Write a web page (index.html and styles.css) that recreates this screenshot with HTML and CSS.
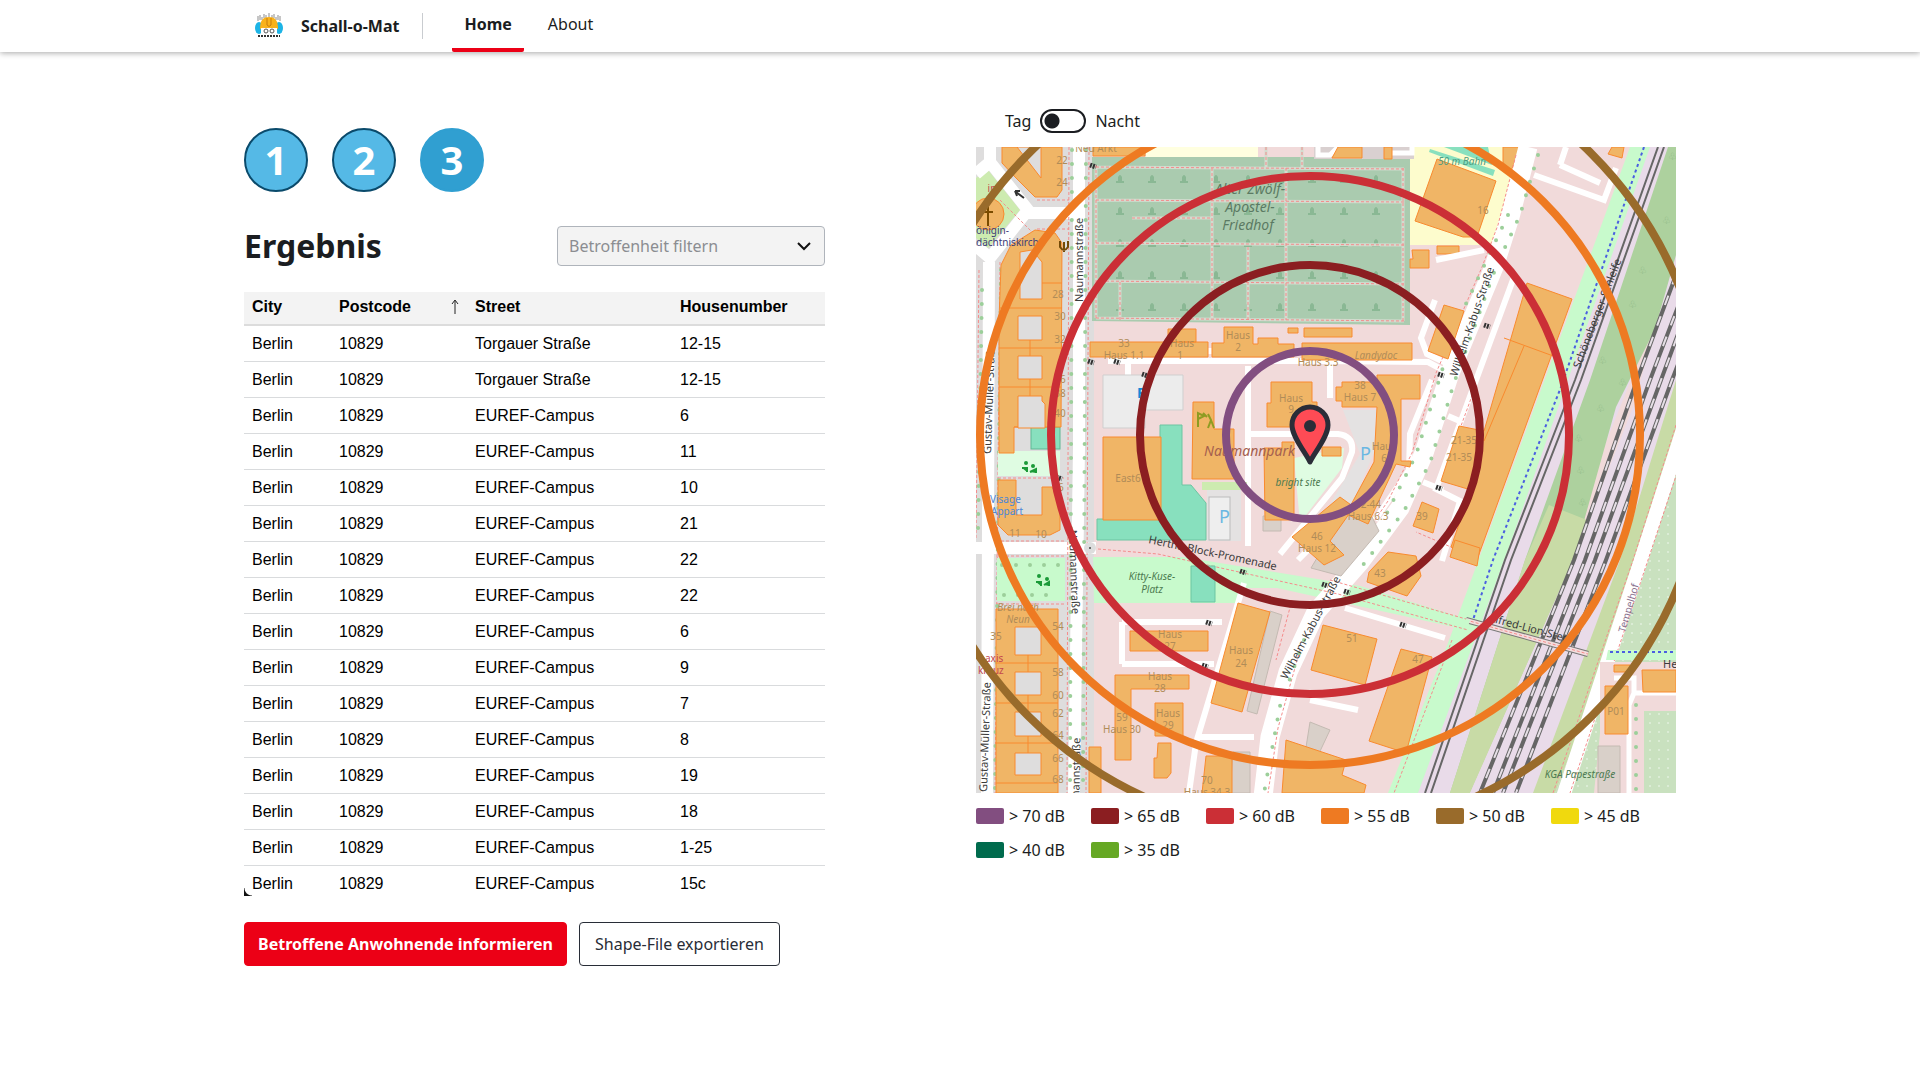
FILE: index.html
```html
<!DOCTYPE html>
<html lang="de">
<head>
<meta charset="utf-8">
<meta name="viewport" content="width=device-width, initial-scale=1">
<title>Schall-o-Mat</title>
<link rel="stylesheet" href="styles.css">
</head>
<body>
<header class="topbar">
  <div class="topbar-inner">
    <a class="brand" href="#">
      <svg class="logo" viewBox="0 0 30 26" aria-hidden="true">
        <g stroke="#8d8d8d" stroke-width="1"><path d="M4 3v5M6 2v5M8 4v3M10 1v4M12 2v3M15 0v4M18 2v3M20 1v4M22 4v3M24 2v5M26 3v5"/></g>
        <ellipse cx="5" cy="15" rx="4" ry="6" fill="#1db4e6"/><ellipse cx="25" cy="15" rx="4" ry="6" fill="#1db4e6"/>
        <path d="M6 16C6 7 9 4 15 4s9 3 9 12z" fill="#f9b21a"/>
        <path d="M13 5v7q2 3 4 0V5" fill="none" stroke="#c77d0b"/>
        <path d="M7 15h16v6q-8 2-16 0z" fill="#fff"/>
        <g fill="#fff" stroke="#555"><circle cx="12" cy="18" r="2"/><circle cx="18" cy="18" r="2"/></g>
        <path d="M4 23h22" stroke="#333" stroke-width="2" stroke-dasharray="2 1"/>
      </svg>
      <span>Schall-o-Mat</span>
    </a>
    <nav class="nav">
      <a class="nav-link active" href="#">Home</a>
      <a class="nav-link" href="#">About</a>
    </nav>
  </div>
</header>

<main class="page">
  <section class="results">
    <div class="steps">
      <button class="step">1</button>
      <button class="step">2</button>
      <button class="step current">3</button>
    </div>
    <div class="results-head">
      <h1>Ergebnis</h1>
      <div class="select-wrap">
        <select class="filter" aria-label="Betroffenheit filtern"><option>Betroffenheit filtern</option></select>
        <svg class="chevron" viewBox="0 0 16 16" aria-hidden="true"><path d="M2 5l6 6 6-6" fill="none" stroke="#111" stroke-width="2"/></svg>
      </div>
    </div>
    <div class="table-wrap">
      <table class="grid">
        <thead><tr><th class="c-city">City</th><th class="c-post"><span class="sorted">Postcode <svg viewBox="0 0 8 16" aria-hidden="true"><path d="M4 15V2M1 5l3-4 3 4" fill="none" stroke="#222"/></svg></span></th><th class="c-street">Street</th><th>Housenumber</th></tr></thead>
        <tbody>
          <tr><td>Berlin</td><td>10829</td><td>Torgauer Straße</td><td>12-15</td></tr>
          <tr><td>Berlin</td><td>10829</td><td>Torgauer Straße</td><td>12-15</td></tr>
          <tr><td>Berlin</td><td>10829</td><td>EUREF-Campus</td><td>6</td></tr>
          <tr><td>Berlin</td><td>10829</td><td>EUREF-Campus</td><td>11</td></tr>
          <tr><td>Berlin</td><td>10829</td><td>EUREF-Campus</td><td>10</td></tr>
          <tr><td>Berlin</td><td>10829</td><td>EUREF-Campus</td><td>21</td></tr>
          <tr><td>Berlin</td><td>10829</td><td>EUREF-Campus</td><td>22</td></tr>
          <tr><td>Berlin</td><td>10829</td><td>EUREF-Campus</td><td>22</td></tr>
          <tr><td>Berlin</td><td>10829</td><td>EUREF-Campus</td><td>6</td></tr>
          <tr><td>Berlin</td><td>10829</td><td>EUREF-Campus</td><td>9</td></tr>
          <tr><td>Berlin</td><td>10829</td><td>EUREF-Campus</td><td>7</td></tr>
          <tr><td>Berlin</td><td>10829</td><td>EUREF-Campus</td><td>8</td></tr>
          <tr><td>Berlin</td><td>10829</td><td>EUREF-Campus</td><td>19</td></tr>
          <tr><td>Berlin</td><td>10829</td><td>EUREF-Campus</td><td>18</td></tr>
          <tr><td>Berlin</td><td>10829</td><td>EUREF-Campus</td><td>1-25</td></tr>
          <tr><td>Berlin</td><td>10829</td><td>EUREF-Campus</td><td>15c</td></tr>
        </tbody>
      </table>
      <span class="corner"></span>
    </div>
    <div class="actions">
      <button class="btn primary">Betroffene Anwohnende informieren</button>
      <button class="btn">Shape-File exportieren</button>
    </div>
  </section>

  <section class="map-side">
    <label class="toggle"><span>Tag</span><input type="checkbox" role="switch"><span>Nacht</span></label>
    <svg class="map" viewBox="976 147 700 646" role="img" aria-label="Karte">
      <defs>
        <pattern id="stones" x="1104" y="164" width="32" height="32" patternUnits="userSpaceOnUse"><path d="M14 13q2-4 4 0v4h2v2h-8v-2h2z" fill="#8ab894"/></pattern>
        <pattern id="dots" width="9" height="9" patternUnits="userSpaceOnUse"><circle cx="3" cy="3" r="1" fill="#e2f0dc"/></pattern>
      </defs>
      <rect x="976" y="147" width="700" height="646" fill="#f1dada"/>

      <!-- residential strip west of Naumannstraße -->
      <rect x="976" y="147" width="118" height="646" fill="#dedddd"/>
      <path d="M976 178l12-8 32 40-32 38-12-10z" fill="#cdebb0"/>
      <path d="M976 174l14-12 38 48-38 48-14-12M990 162v-15M1028 213h50M989 262l-2 531M976 548h120" fill="none" stroke="#fff" stroke-width="12"/>
      <path d="M1079 147v300l-5 346" fill="none" stroke="#fff" stroke-width="12"/>
      <path d="M1069 147l-2 646M1089 147l-3 646M1000 200l60 60M1037 200h32M1037 229h32M1000 262l-5 531M979 270l-3 270M998 478h66M996 541h70M996 556h70M996 604h68" class="foot"/>
      <path d="M1072 150l-2 640M1086 150l-3 640M1001 270l-6 520M982 290l-4 240" class="trees"/>
      <rect x="997" y="558" width="68" height="43" fill="#c8facc"/>
      <path d="M1002 565h58M1004 595h56" class="trees"/>
      <rect x="998" y="451" width="62" height="25" fill="#dffce2"/>
      <rect x="1031" y="427" width="29" height="22" fill="#88e0be" stroke="#5fb794"/>
      <g class="bld">
        <path d="M1002 147h60v43l-5 7h-22l-20-20-13-14zM1035 230l20 3 7 10-1 184h-47v26h-15V320l2-55 10-20z"/>
        <path d="M998 480h18v35h26v-28h18v43l-10 5h-42l-10-10zM996 609h62v184h-62z"/>
        <path d="M999 348h62M999 387h62M1000 308h62M1030 338v18M1030 379v17M996 663h62M996 703h62M996 743h62M996 783h62M1028 655v17M1028 695v17M1028 736v17M1041 283h21M1014 427h17"/>
        <circle cx="988" cy="214" r="16"/>
      </g>
      <g class="court">
        <path d="M1017 147h24v31zM1020 252l12-2 10 12v37h-22zM1018 316h24v24h-24zM1018 356h24v23h-24zM1018 396h24v5l3 3v24h-27z"/>
        <path d="M1015 627h26v28h-26zM1015 672h26v23h-26zM1015 712h26v24h-26zM1015 753h26v22h-26z"/>
      </g>
      <path d="M988 206v20M983 212h10" stroke="#7a4b00" stroke-width="2"/>
      <path d="M1016 192l8 6M1015 191l5 0M1015 191l2 5" stroke="#333" stroke-width="2" fill="none"/>
      <g fill="#1b9a38"><circle cx="1026" cy="463" r="2"/><circle cx="1033" cy="466" r="2"/><path d="M1022 468l5 0 0 4M1030 472l6-3v4" stroke="#1b9a38" stroke-width="2"/><circle cx="1039" cy="576" r="2"/><circle cx="1047" cy="579" r="2"/><path d="M1036 582l5 0 0 4M1044 585l5-3v4" stroke="#1b9a38" stroke-width="2"/></g>

      <!-- cemetery and sports ground -->
      <path d="M1092 157h318v168l-318-4z" fill="#aacbaf"/>
      <path d="M1094 170h310v150h-310z" fill="url(#stones)"/>
      <path d="M1096 167l308 2M1096 200l308 2M1096 243l308 2M1096 281l308 3M1096 318l308 3M1096 165v153M1212 168v150M1286 168v152M1248 247v72M1403 168v153M1132 218h80M1266 147v20M1302 147v20M1120 282v38" class="foot halo"/>
      <path d="M1096 167l308 2M1096 200l308 2M1096 243l308 2M1096 281l308 3M1096 318l308 3M1096 165v153M1212 168v150M1286 168v152M1248 247v72M1403 168v153M1132 218h80M1266 147v20M1302 147v20M1120 282v38" class="foot"/>
      <path d="M1146 147h112v10h-112z" fill="#ffffe0"/>
      <path d="M1410 147h110l-24 98h-86z" fill="#fdfccd"/>
      <path d="M1430 149l65 21-2 6-64-24zM1444 147h44l4 18z" fill="#88e0be"/>
      <path d="M1314 147h100v12h-100z" fill="#d9d0d0"/>
      <path d="M1318 147v8h12l8-8M1392 153h20v-6" fill="none" stroke="#fff" stroke-width="5"/>
      <g class="bld"><path d="M1093 147h52v9h-52zM1338 147h24v11h-30zM1384 147h8v12h-8z"/><path d="M1437 159l59 22-19 56-14 0-48-16zM1503 147h18l-10 24-8-4zM1412 250h17v18h-19v-9h3zM1437 246h22v8h-22z"/></g>

      <!-- railway corridor -->
      <path d="M1630 147h22l-78 233-70 180-80 233h-36l60-150z" fill="#c8facc"/>
      <path d="M1650 147h26v120l-210 526h-48l90-243z" fill="#e9dbe9"/>
      <path d="M1668 147h8v140l-60 120-43 153-103 233h-20l75-233 65-180z" fill="#add19e"/>
      <path d="M1549 505l38 15-14 40-103 233h-20l75-233z" fill="#c8dba6"/>
      <path d="M1676 255v195l-42 110-90 233h-74l103-233 60-153z" fill="#e9dbe9"/>
      <path d="M1676 380v70l-31 110-90 233h-22l87-233z" fill="#c8dba6"/>
      <path d="M1676 430v363h-121l90-233z" fill="#c9e1bf"/><path d="M1676 430v363h-121l90-233z" fill="url(#dots)"/>
      <path d="M1658 147l-83 233-70 180-80 233M1664 147l-83 233-70 180-80 233" fill="none" stroke="#666" stroke-width="2"/>
      <path d="M1644 147l-83 240-68 173-20 60" fill="none" stroke="#4a5fe0" stroke-width="2" stroke-dasharray="3 3"/>
      <path d="M1676 275l-39 105-63 180-94 233M1690 275l-40 105-65 180-92 233M1700 275l-39 105-66 180-92 233M1712 275l-40 105-66 180-90 233" class="rail-a"/>
      <path d="M1676 275l-39 105-63 180-94 233M1690 275l-40 105-65 180-92 233M1700 275l-39 105-66 180-92 233M1712 275l-40 105-66 180-90 233" class="rail-b"/>
      <path d="M1686 420l-45 140-79 240" fill="none" stroke="#fff" stroke-width="14"/>
      <path d="M1676 425l-43 135-80 233M1688 440l-40 120-78 233" class="foot"/>
      <path d="M1466 620l122 34" stroke="#777" stroke-width="6"/><path d="M1466 620l122 34" stroke="#f3dddd" stroke-width="4"/><path d="M1466 620l122 34" class="foot"/>
      <path d="M1608 650h68v10h-70z" fill="#c8facc"/><path d="M1610 652h66" stroke="#4a5fe0" stroke-width="2" stroke-dasharray="3 3"/>
      <path d="M1600 662h76v131h-82l6-60z" fill="#f1dada"/><path d="M1644 711h32v82h-32z" fill="#c9e1bf"/><path d="M1644 711h32v82h-32z" fill="url(#dots)"/>
      <path d="M1614 678h20v15h42M1634 693l-5 12v88" fill="none" stroke="#fff" stroke-width="5"/>
      <path d="M1636 705v85" class="trees"/>
      <g class="bld"><path d="M1614 665h16v7h-16zM1642 670h34v22h-33zM1605 686h23v48h-23z"/></g>
      <path d="M1598 746h22v47h-22z" class="shade"/>

      <!-- streets of the campus -->
      <path d="M1093 557h90l177 29 110 34-3 10-190-42h-32l-7 15h-144z" fill="#c8facc"/>
      <g fill="none" stroke="#fff" stroke-width="6">
        <path d="M1108 361h210l110 1 26 14M1248 366v180M1248 434h90q16 2 14 18l-10 26-62 76M1128 355v22M1318 540l-20 20M1330 364v34"/>
        <path d="M1435 300l-14 38 6 16 30 14M1436 260l48-10M1514 277l-56 152-22 60 24 12-18 60M1432 380l-22 54-1 36-34 50M1448 416l14 6M1423 482l20 8M1244 583l-48 160-7 50M1200 737h54M1122 622h100M1122 664h92M1122 622v42M1345 608l100 30M1310 700l48 10M1258 352h35M1094 351h140M1534 175l70 25 12-32M1560 165l40 18M1560 165l6-18"/>
      </g>
      <path d="M1528 147l-18 70-16 50-44 106-26 80-24 55-40 54-44 50-28 60-18 65-7 60" fill="none" stroke="#fff" stroke-width="19"/>
      <path d="M1516 155l-18 70-16 42-46 106-24 80-24 48-40 58M1476 385l-22 60M1300 650l-22 78-10 65M1292 600l-16 60M1458 550l-42-18M1098 549l60 5 180 40 130 36M1330 580l136 39M1452 640l-58 153" class="foot"/>
      <path d="M1538 155l-18 60-24 52-42 116-24 80-26 48-44 58M1508 215l-52 110-40 130-30 60M1304 640l-24 66-16 87" class="trees"/>
      <path d="M1103 375h80v35h-38v18h-42z" fill="#ececec" stroke="#cfcfcf"/>
      <path d="M1207 487h34v54h-34zM1343 410h33l-1 40-25 60-20-6 30-50z" fill="#e4e2e2"/>
      <rect x="1209" y="497" width="21" height="43" fill="#eee" stroke="#bbb"/>
      <path d="M1160 425h22v60h9l15 18v37h-109v-21h63z" class="teal"/><path d="M1191 566h24v36h-24z" class="teal"/>
      <path d="M1294 458l50-10-2 20-42 55z" fill="#dffce2"/><path d="M1202 482h45l-2 8h-43z" fill="#cdebb0"/>
      <path d="M1263 516h18v15h-18zM1270 611l12 4-25 99-10-3zM1344 513l25-2 10 20-38 45-30-8zM1233 752h17v41h-20zM1310 722l20 8-16 34-10-4z" class="shade"/>

      <g class="bld">
        <path d="M1090 342h118v15h-118zM1168 329h28v13h-28zM1212 343h12v-16h29v17h5v-6h20v6h16v13h-82zM1302 343h110v17h-110zM1288 328h10v5h-10zM1304 328h48v9h-48z"/>
        <path d="M1103 437h58v83h-58zM1193 402h21v27h20v50h-42zM1271 382h41v20h5v25h-50v-24h4zM1264 448h18v-6h12v78h-29z"/>
        <path d="M1342 382h35v-7h43v24h-19v62h10l-1 6-14-3-28 60-22-10 28-52 3-55h-35v-6h-6v-14h6zM1322 447h19v9h-19zM1340 497l14 10-24 34 14 14-20 10-32-28z"/>
        <path d="M1444 305l20 6-16 48-20-8zM1527 283l45 16-94 258-27-10 20-57-30-9 18-55 25 5zM1504 338l52 19M1524 346l-40 95M1422 502l17 7-6 24-20-7zM1388 552l28 4 5 20-14 20-40-14 2-10z"/>
        <path d="M1238 603l32 9-28 100-31-9zM1130 631h78v20h-78zM1115 675h74v14h-58v71h-16zM1155 703h28v33h-28zM1158 743h13v30l-4 5h-13v-20h3zM1089 747h12v46h-12zM1206 756h26v37h-30z"/>
        <path d="M1323 625l54 14-12 46-54-15zM1401 649l31 8-26 96-37-12zM1286 740l60 20-4 15 24 10-2 8h-82zM1455 540l25 8-3 18-27-9zM1612 147h12l-2 11-14-4z"/>
      </g>
      <path d="M1088 361l6 2M1114 361l6 2M1142 374l6 2M1206 622l6 2M1240 571l6 2M1202 665l6 2M1056 477l6 2M1438 374l6 2M1436 487l6 2M1400 624l6 2M1484 325l6 2M1090 165l6 2M1322 584l6 2M1344 591l6 2" stroke="#333" stroke-width="5" stroke-dasharray="2 1"/>
      <circle cx="1090" cy="548" r="6" fill="#ddd"/><circle cx="1090" cy="548" r="1" fill="#444"/>
      <g fill="#8bb583" font-size="10" opacity=".8"><text x="1668" y="160">♧</text><text x="1662" y="224">♧</text><text x="1638" y="274">♧</text><text x="1628" y="308">♧</text><text x="1598" y="364">♧</text><text x="1618" y="386">♧</text><text x="1596" y="412">♧</text><text x="1574" y="442">♧</text><text x="1576" y="474">♧</text><text x="1578" y="506">♧</text></g>

      <g class="lbl">
        <g class="area"><text x="1250" y="194">Alter Zwölf-</text><text x="1250" y="212">Apostel-</text><text x="1248" y="230">Friedhof</text></g>
        <g class="road">
          <text transform="translate(1083 302) rotate(-90)">Naumannstraße</text>
          <text transform="translate(1069 530) rotate(88)">Naumannstraße</text>
          <text transform="translate(1079 822) rotate(-89)">Naumannstraße</text>
          <text transform="translate(991 454) rotate(-88)">Gustav-Müller-Straße</text>
          <text transform="translate(987 792) rotate(-88)">Gustav-Müller-Straße</text>
          <text transform="translate(1457 377) rotate(-71)">Wilhelm-Kabus-Straße</text>
          <text transform="translate(1287 680) rotate(-62)">Wilhelm-Kabus-Straße</text>
          <text transform="translate(1580 369) rotate(-69)">Schöneberger-Schleife</text>
          <text transform="translate(1148 543) rotate(12)">Hertha-Block-Promenade</text>
          <text transform="translate(1488 621) rotate(15)">Alfred-Lion-Steg</text>
          <text x="1663" y="668">Hedwig</text>
        </g>
        <text transform="translate(1625 633) rotate(-74)" fill="#8a7390">Tempelhof</text>
        <g class="green"><text x="1152" y="580">Kitty-Kuse-</text><text x="1152" y="593">Platz</text><text x="1298" y="486">bright site</text><text x="1580" y="778">KGA Papestraße</text><text x="1462" y="165" fill="#4e9b80">50 m Bahn</text></g>
        <text x="1204" y="456" font-size="14" font-style="italic" fill="#a5604f">Naumannpark</text>
        <g class="blue"><text x="976" y="234">önigin-</text><text x="976" y="246">dächtniskirche</text></g>
        <g fill="#4a86d8"><text x="990" y="503">Visage</text><text x="991" y="515">Appart</text></g>
        <g fill="#c4484e"><text x="992" y="192" text-anchor="middle">in</text><text x="985" y="662">axis</text><text x="978" y="674">kreuz</text></g>
        <g font-size="18" fill="#6ab7e2"><text x="1219" y="523">P</text><text x="1360" y="460">P</text></g>
        <text x="1137" y="398" font-size="15" font-weight="700" fill="#1389d6">P</text>
        <g class="house">
          <text x="1128" y="482">East6</text><text x="1124" y="347">33</text><text x="1124" y="359">Haus 1.1</text><text x="1182" y="347">Haus</text><text x="1180" y="359">1</text><text x="1238" y="339">Haus</text><text x="1238" y="351">2</text><text x="1318" y="366">Haus 3.3</text>
          <text x="1376" y="359" font-style="italic">Landydoc</text><text x="1291" y="402">Haus</text><text x="1291" y="413">9</text><text x="1360" y="389">38</text><text x="1360" y="401">Haus 7</text><text x="1384" y="450">Haus</text><text x="1384" y="462">6</text><text x="1368" y="508">42-44</text><text x="1368" y="520">Haus 6.3</text><text x="1317" y="540">46</text><text x="1317" y="552">Haus 12</text>
          <text x="1464" y="444">21-35</text><text x="1459" y="461">21-35</text><text x="1422" y="520">39</text><text x="1380" y="577">43</text><text x="1352" y="642">51</text><text x="1418" y="663">47</text><text x="1616" y="715">P01</text><text x="1483" y="214">16</text>
          <text x="1170" y="638">Haus</text><text x="1170" y="650">27</text><text x="1160" y="680">Haus</text><text x="1160" y="692">28</text><text x="1168" y="717">Haus</text><text x="1168" y="729">29</text><text x="1122" y="721">59</text><text x="1122" y="733">Haus 30</text><text x="1241" y="654">Haus</text><text x="1241" y="667">24</text><text x="1207" y="784">70</text><text x="1207" y="796">Haus 34.3</text>
          <text x="1062" y="164">22</text><text x="1062" y="186">24</text><text x="1058" y="298">28</text><text x="1060" y="320">30</text><text x="1060" y="343">32</text><text x="1060" y="383">36</text><text x="1060" y="397">38</text><text x="1060" y="417">40</text><text x="1058" y="491">46</text><text x="1015" y="537">11</text><text x="1041" y="538">10</text><text x="1058" y="630">54</text><text x="1058" y="676">58</text><text x="1058" y="699">60</text><text x="1058" y="717">62</text><text x="1058" y="739">64</text><text x="1058" y="762">66</text><text x="1058" y="783">68</text><text x="996" y="640">35</text>
          <text x="1018" y="611" font-style="italic">Brei nach</text><text x="1018" y="623" font-style="italic">Neun</text><text x="1096" y="152">Neu Arkt</text>
        </g>
      </g>
      <g stroke="#8e9c22" stroke-width="2" fill="none"><path d="M1198 427v-14l6 3-6 3M1208 428l3-8-3-6M1211 420l3 8M1207 417l-4-4"/></g>
      <path d="M1060 241v6q4 6 8 0v-6M1064 242v10" stroke="#734a08" stroke-width="2" fill="none"/>

      <!-- noise level rings -->
      <g fill="none" stroke-width="8">
        <circle cx="1310" cy="435" r="398" stroke="#996b2b"/>
        <circle cx="1310" cy="435" r="330" stroke="#ee7a22"/>
        <circle cx="1310" cy="435" r="259" stroke="#cb2f36"/>
        <circle cx="1310" cy="435" r="170" stroke="#8b1e21"/>
        <circle cx="1310" cy="435" r="84" stroke="#824e80"/>
      </g>
      <path d="M1310 462c-4-9-18-25-18-37a18 18 0 0 1 36 0c0 12-14 28-18 37z" fill="#ff4b55" stroke="#2b2d38" stroke-width="5" stroke-linejoin="round"/>
      <circle cx="1310" cy="426" r="6" fill="#2b2d38"/>
    </svg>
    <ul class="legend">
      <li><i class="swatch s70"></i>&gt; 70 dB</li><li><i class="swatch s65"></i>&gt; 65 dB</li><li><i class="swatch s60"></i>&gt; 60 dB</li><li><i class="swatch s55"></i>&gt; 55 dB</li><li><i class="swatch s50"></i>&gt; 50 dB</li><li><i class="swatch s45"></i>&gt; 45 dB</li><li><i class="swatch s40"></i>&gt; 40 dB</li><li><i class="swatch s35"></i>&gt; 35 dB</li>
    </ul>
  </section>
</main>
</body>
</html>
```
FILE: styles.css
```css
* { box-sizing: border-box; }
body { margin: 0; background: #fff; color: #1b1d21; font: 16px/24px "Noto Sans", sans-serif; }
a { color: inherit; text-decoration: none; }
button, select { font: inherit; color: inherit; }

.topbar { height: 52px; background: #fff; box-shadow: 0 1px 6px rgba(0, 0, 0, .35); }
.topbar-inner { display: flex; align-items: stretch; height: 100%; max-width: 1432px; margin: 0 auto; }
.brand { display: flex; align-items: center; align-self: center; gap: 17px; height: 26px; padding: 0 23px 0 10px; border-right: 1px solid #c9ccd0; font-weight: 700; }
.logo { width: 30px; height: 26px; }
.nav { display: flex; gap: 12px; margin-left: 29px; }
.nav-link { display: flex; align-items: center; padding: 0 12px; border-bottom: 4px solid transparent; }
.nav-link.active { border-color: #ec0016; border-radius: 2px; font-weight: 700; }

.page { display: grid; grid-template-columns: 581fr 700fr; column-gap: 151px; max-width: 1432px; margin: 0 auto; }
.results { padding-top: 76px; }
.steps { display: flex; gap: 24px; }
.step { width: 64px; height: 64px; padding: 0; border: 2px solid #0a4a6b; border-radius: 50%; background: #55b9e6; color: #fff; font-size: 40px; line-height: 56px; font-weight: 700; }
.step.current { border-color: #309fd1; background: #309fd1; }
.results-head { display: flex; align-items: center; justify-content: space-between; margin: 34px 0 26px; }
h1 { margin: 0; font-size: 32px; line-height: 40px; }
.select-wrap { position: relative; width: 268px; }
.filter { display: block; width: 100%; height: 40px; padding: 0 11px; border: 1px solid #afb4bb; border-radius: 4px; background: #f3f3f3; color: #8b8d91; appearance: none; }
.chevron { position: absolute; top: 12px; right: 13px; width: 16px; height: 16px; pointer-events: none; }

.table-wrap { position: relative; max-height: 604px; overflow: hidden; }
.grid { width: 100%; border-collapse: separate; border-spacing: 0; table-layout: fixed; color: #000; font-family: "Liberation Sans", sans-serif; line-height: 20px; }
.grid th { height: 34px; padding: 0 8px 2px; border-bottom: 2px solid #dcdcdc; background: #f3f3f3; text-align: left; }
.grid td { height: 36px; padding: 0 8px; border-bottom: 1px solid #d9dbdd; }
.c-city { width: 87px; }
.c-post { width: 136px; }
.c-street { width: 205px; }
.sorted { display: flex; align-items: center; justify-content: space-between; }
.sorted svg { width: 8px; height: 16px; }
.corner { position: absolute; left: 0; bottom: 0; width: 8px; height: 8px; background: radial-gradient(circle at 100% 0, transparent 7px, #111 8px); }

.actions { display: flex; gap: 12px; margin-top: 26px; }
.btn { height: 44px; padding: 0 15px; border: 1px solid #282d37; border-radius: 4px; background: #fff; color: #282d37; }
.btn.primary { padding: 0 13px; border-color: #ec0016; background: #ec0016; color: #fff; font-weight: 700; }

.map-side { padding-top: 57px; }
.toggle { display: flex; align-items: center; gap: 9px; width: max-content; height: 24px; margin: 0 0 14px 29px; }
.toggle input { appearance: none; width: 46px; height: 24px; margin: 0; border: 2px solid #1b1d21; border-radius: 12px; background: radial-gradient(circle at 10px 10px, #1b1d21 7px, transparent 8px); }
.map { display: block; width: 100%; height: auto; overflow: hidden; }
.legend { display: flex; flex-wrap: wrap; row-gap: 10px; margin: 11px 0 0; padding: 0; list-style: none; }
.legend li { display: flex; align-items: center; gap: 5px; width: 115px; }
.swatch { width: 28px; height: 16px; border-radius: 2px; }
.s70 { background: #824e80; } .s65 { background: #8b1e21; } .s60 { background: #cb2f36; } .s55 { background: #ee7a22; }
.s50 { background: #996b2b; } .s45 { background: #f0d90e; } .s40 { background: #006b4d; } .s35 { background: #66a824; }

.foot { fill: none; stroke: #f58c8c; stroke-width: 1; stroke-dasharray: 3 2; }
.foot.halo { stroke: #d3dccf; stroke-width: 3; stroke-dasharray: none; }
.trees { fill: none; stroke: #9ccf9a; stroke-width: 4; stroke-linecap: round; stroke-dasharray: 0 14; }
.bld { fill: #f0b566; stroke: #f98a2e; stroke-width: 1; }
.court { fill: #dedddd; stroke: #f98a2e; }
.shade { fill: #d9d0c9; stroke: #c4bab2; }
.teal { fill: #88e0be; stroke: #6cc5a2; }
.rail-a { fill: none; stroke: #666; stroke-width: 4; }
.rail-b { fill: none; stroke: #e6dfe6; stroke-width: 2; stroke-dasharray: 10 12; }
.lbl { font-size: 10px; }
.area { font-size: 14px; font-style: italic; fill: #5b7a63; text-anchor: middle; }
.road { fill: #3b3b3b; font-size: 11px; }
.green { fill: #4c7a50; font-style: italic; text-anchor: middle; }
.blue { fill: #3c3c78; }
.house { fill: #b08c58; text-anchor: middle; }
```
